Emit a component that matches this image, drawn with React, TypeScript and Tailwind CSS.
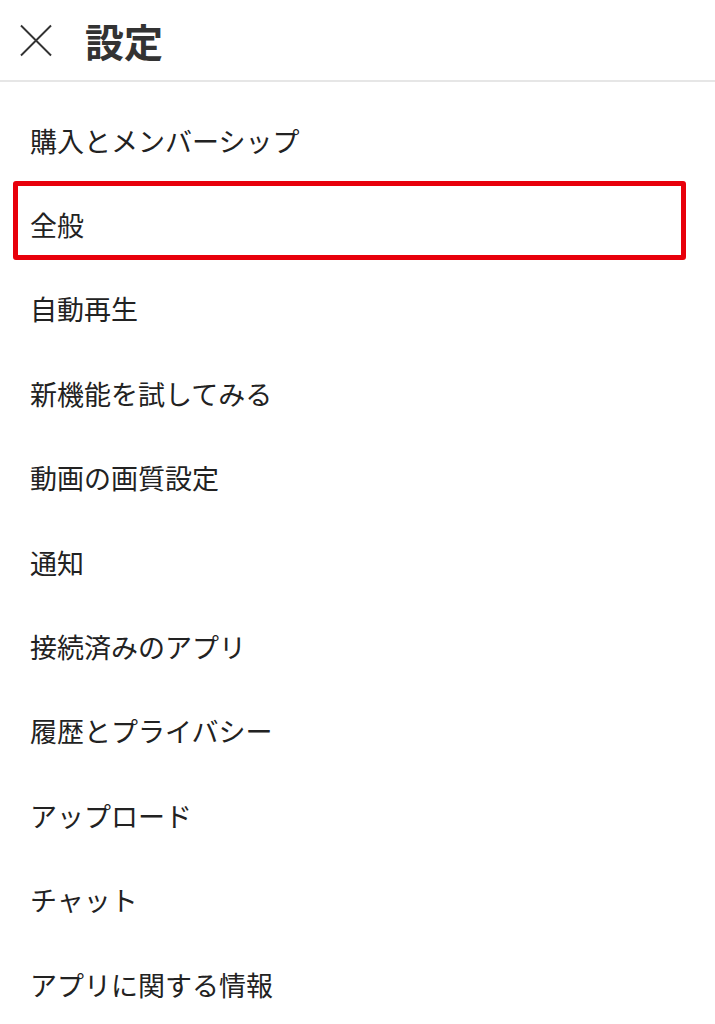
const items = [
  "購入とメンバーシップ",
  "全般",
  "自動再生",
  "新機能を試してみる",
  "動画の画質設定",
  "通知",
  "接続済みのアプリ",
  "履歴とプライバシー",
  "アップロード",
  "チャット",
  "アプリに関する情報",
];

const font = { fontFamily: '"Noto Sans CJK JP", "Noto Sans", sans-serif' };

export default function App() {
  return (
    <div className="min-h-[1024px] w-[715px] bg-white text-[#222]" style={font}>
      <header className="flex h-[82px] items-center border-b-2 border-[#e6e6e6]">
        <button className="ml-[20px] flex h-[32px] w-[32px] items-center justify-center text-[#333]">
          <svg width="33" height="33" viewBox="0 0 33 33" fill="none" stroke="currentColor" strokeWidth="2">
            <path d="M1 1 L32 32 M32 1 L1 32" />
          </svg>
        </button>
        <h1 className="ml-[33px] text-[39px] font-bold leading-none text-[#333]">設定</h1>
      </header>

      <ul className="pt-[16px]">
        {items.map((label, i) => (
          <li key={label} className="relative flex h-[84.4px] items-center pl-[30px]">
            <span className="text-[27px] leading-none">{label}</span>
            {i === 1 && (
              <div className="absolute left-[13px] right-[29px] top-[-1px] bottom-[7px] rounded-[3px] border-[5px] border-[#e8000b]" />
            )}
          </li>
        ))}
      </ul>
    </div>
  );
}
